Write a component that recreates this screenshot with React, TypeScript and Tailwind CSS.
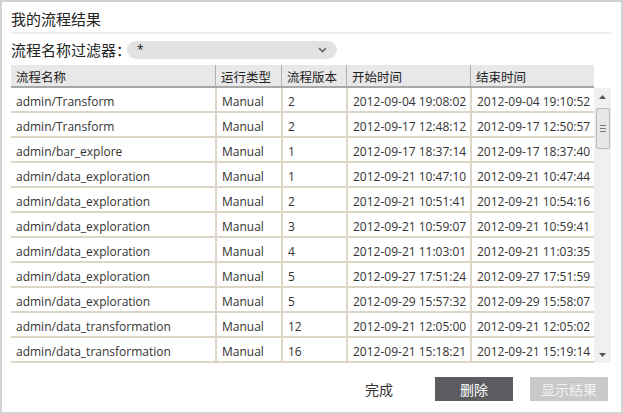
import React from "react";

const rows: [string, string, string, string, string][] = [
  ["admin/Transform", "Manual", "2", "2012-09-04 19:08:02", "2012-09-04 19:10:52"],
  ["admin/Transform", "Manual", "2", "2012-09-17 12:48:12", "2012-09-17 12:50:57"],
  ["admin/bar_explore", "Manual", "1", "2012-09-17 18:37:14", "2012-09-17 18:37:40"],
  ["admin/data_exploration", "Manual", "1", "2012-09-21 10:47:10", "2012-09-21 10:47:44"],
  ["admin/data_exploration", "Manual", "2", "2012-09-21 10:51:41", "2012-09-21 10:54:16"],
  ["admin/data_exploration", "Manual", "3", "2012-09-21 10:59:07", "2012-09-21 10:59:41"],
  ["admin/data_exploration", "Manual", "4", "2012-09-21 11:03:01", "2012-09-21 11:03:35"],
  ["admin/data_exploration", "Manual", "5", "2012-09-27 17:51:24", "2012-09-27 17:51:59"],
  ["admin/data_exploration", "Manual", "5", "2012-09-29 15:57:32", "2012-09-29 15:58:07"],
  ["admin/data_transformation", "Manual", "12", "2012-09-21 12:05:00", "2012-09-21 12:05:02"],
  ["admin/data_transformation", "Manual", "16", "2012-09-21 15:18:21", "2012-09-21 15:19:14"],
];

const widths = ["w-[204px]", "w-[66px]", "w-[65px]", "w-[124px]", "w-[124px]"];
const headers = ["流程名称", "运行类型", "流程版本", "开始时间", "结束时间"];

const cjk = { fontFamily: '"Noto Sans CJK SC", "Noto Sans", sans-serif' };
const latin = { fontFamily: '"Open Sans", "Noto Sans CJK SC", sans-serif' };

export default function App() {
  return (
    <div className="w-[623px] h-[414px] bg-white relative overflow-hidden">
      <div className="w-[623px] h-[414px] border-2 border-[#d2d2d2] pl-[9px] pr-[9px] flex flex-col">
        <div className="h-[30px] flex items-center pt-[2px] text-[15px] text-[#222] leading-none" style={cjk}>
          我的流程结果
        </div>
        <div className="h-[2px] w-[600px] bg-[#ececec]" />
        <div className="h-[31px] flex items-center">
          <span className="text-[15px] text-[#222] leading-none" style={cjk}>
            流程名称过滤器：
          </span>
          <div className="ml-[-4px] w-[210px] h-[18px] rounded-full bg-[#e2e2e2] flex items-center justify-between pl-[10px] pr-[10px]">
            <span className="text-[12px] leading-none text-[#111]" style={latin}>*</span>
            <svg width="9" height="6" viewBox="0 0 9 6">
              <path d="M1 1 L4.5 4.5 L8 1" stroke="#666" strokeWidth="1.6" fill="none" />
            </svg>
          </div>
        </div>
        <div className="flex h-[23px] w-[583px] bg-[#e8e8e8] border-b-2 border-[#a8a8a8]">
          {headers.map((h, i) => (
            <div
              key={h}
              className={`${widths[i]} flex items-center pl-[5px] pt-[3px] text-[12.5px] text-[#222] ${i > 0 ? "border-l border-[#b0b0b0]" : ""}`}
              style={cjk}
            >
              {h}
            </div>
          ))}
        </div>
        <div className="flex">
          <div className="w-[583px]">
            {rows.map((r, ri) => (
              <div key={ri} className="flex h-[25px] border-b-2 border-[#ddd5c6]">
                {r.map((c, ci) => (
                  <div
                    key={ci}
                    className={`${widths[ci]} flex items-center pl-[5px] pt-[4px] text-[12px] text-[#333] whitespace-nowrap ${ci > 0 ? "border-l-2 border-[#ddd5c6]" : ""}`}
                    style={latin}
                  >
                    {c}
                  </div>
                ))}
              </div>
            ))}
          </div>
          <div className="w-[17px] h-[275px] bg-[#f0f0f0] flex flex-col items-center">
            <div className="h-[18px] flex items-center justify-center">
              <svg width="7" height="4" viewBox="0 0 7 4">
                <path d="M0 4 L3.5 0 L7 4 Z" fill="#555" />
              </svg>
            </div>
            <div className="w-[14px] h-[41px] mt-[2px] rounded-[2px] border border-[#b8b8b8] bg-[#e6e6e6] flex flex-col items-center justify-center gap-[2px]">
              <div className="w-[6px] h-px bg-[#777]" />
              <div className="w-[6px] h-px bg-[#777]" />
              <div className="w-[6px] h-px bg-[#777]" />
            </div>
            <div className="flex-1" />
            <div className="h-[16px] flex items-center justify-center">
              <svg width="7" height="4" viewBox="0 0 7 4">
                <path d="M0 0 L3.5 4 L7 0 Z" fill="#555" />
              </svg>
            </div>
          </div>
        </div>
        <div className="flex items-center justify-end mt-[14px] pr-[4px]">
          <span className="text-[14px] text-[#333] mr-[42px]" style={cjk}>完成</span>
          <div className="w-[78px] h-[24px] bg-[#5c5c60] flex items-center justify-center text-[14px] text-white" style={cjk}>
            删除
          </div>
          <div className="ml-[17px] w-[78px] h-[24px] bg-[#c9c9c9] flex items-center justify-center text-[14px] text-[#f2f2f2]" style={cjk}>
            显示结果
          </div>
        </div>
      </div>
    </div>
  );
}
